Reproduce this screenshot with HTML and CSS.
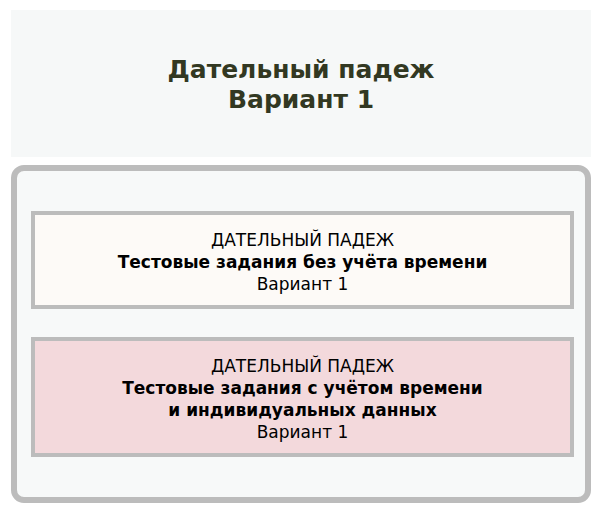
FILE: index.html
```html
<!DOCTYPE html>
<html lang="ru">
<head>
    <meta charset="UTF-8">
    <meta name="viewport" content="width=device-width, initial-scale=1.0">
    <title>Дательный падеж | Вариант 1</title>
    <link rel="stylesheet" href="styles.css">
</head>
<body>

    <div class="page">
        <div class="header">
            <h1>Дательный падеж<br>Вариант 1</h1>
        </div>

        <div class="tests">
            <a class="test-card plain" href="#">
                <span class="topic">ДАТЕЛЬНЫЙ ПАДЕЖ</span>
                <span class="mode">Тестовые задания без учёта времени</span>
                <span class="variant">Вариант 1</span>
            </a>

            <a class="test-card timed" href="#">
                <span class="topic">ДАТЕЛЬНЫЙ ПАДЕЖ</span>
                <span class="mode">Тестовые задания с учётом времени<br>и индивидуальных данных</span>
                <span class="variant">Вариант 1</span>
            </a>
        </div>
    </div>

</body>
</html>
```

FILE: styles.css
```css
* {
    margin: 0;
    padding: 0;
    box-sizing: border-box;
    font-family: 'DejaVu Sans', Verdana, sans-serif;
}
body {
    background: white;
}
.page {
    padding: 10px 9px 0 11px;
    display: flex;
    flex-direction: column;
    gap: 8px;
}
.header {
    height: 147px;
    background: #f6f8f8;
    display: flex;
    align-items: center;
    justify-content: center;
}
.header h1 {
    color: #323822;
    font-size: 25px;
    font-weight: bold;
    line-height: 30px;
    text-align: center;
    padding-top: 2px;
}
.tests {
    height: 338px;
    border: 6px solid #bcbcbc;
    border-radius: 13px;
    background: #f7f9f9;
    padding: 40px 11px 0 14px;
    display: flex;
    flex-direction: column;
    gap: 28px;
}
.test-card {
    display: flex;
    flex-direction: column;
    align-items: center;
    text-align: center;
    border: 4px solid #bcbcbc;
    padding: 14px 10px 10px;
    color: black;
    text-decoration: none;
    font-size: 17px;
    line-height: 22px;
}
.test-card.plain {
    background: #fdfaf7;
}
.test-card.timed {
    background: #f3d9dc;
}
.test-card .mode {
    font-weight: bold;
}
```
